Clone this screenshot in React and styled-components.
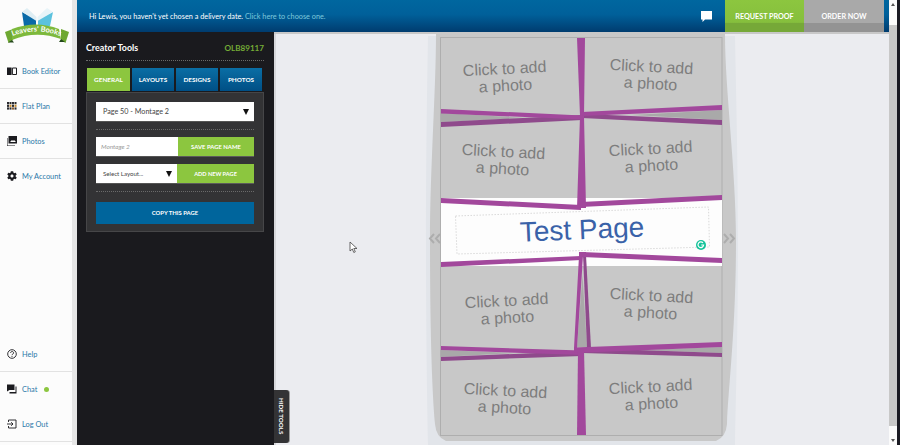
import React from "react";
import styled, { createGlobalStyle } from "styled-components";
import { FaCog } from "react-icons/fa";

const Global = createGlobalStyle`
  html, body { margin: 0; padding: 0; height: 100%; overflow: hidden; background: #ebecf0; }
  #root { height: 445px; }
  * { box-sizing: border-box; }
`;

const Shell = styled.div`
  display: flex; width: 900px; height: 445px; overflow: hidden;
  font-family: Lato, "Open Sans", sans-serif;
`;

/* ---------- Sidebar ---------- */
const Sidebar = styled.aside`
  width: 77px; flex: none; display: flex; flex-direction: column;
  background: #fcfcfc; border-right: 5px solid #e6e6e6;
`;
const LogoBox = styled.div`height: 54px; padding: 0; display: flex;`;
const NavList = styled.nav`display: flex; flex-direction: column;`;
const Spacer = styled.div`flex: 1;`;
const NavItem = styled.a`
  height: 35px; display: flex; align-items: center; gap: 5px; padding-left: 7px;
  font-size: 7.4px; color: #2a78a8; white-space: nowrap;
  border-bottom: 1px solid ${p => p.$line ? "#e2e2e2" : "transparent"};
  svg { flex: none; width: 10px; height: 10px; color: #1b1b1f; }
`;
const Online = styled.span`
  width: 5px; height: 5px; border-radius: 50%; background: #8cc63f; margin-left: 2px;
`;
const BottomPad = styled.div`height: 3px;`;

/* ---------- Workspace ---------- */
const Workspace = styled.div`flex: 1; min-width: 0; display: flex; flex-direction: column;`;
const TopBar = styled.header`
  height: 32px; flex: none; display: flex; align-items: stretch;
  padding-right: 5px;
  background: linear-gradient(#00679f 0%, #00609a 45%, #003c6f 100%);
`;
const Notice = styled.p`
  flex: 1; margin: 0; padding-left: 12px; align-self: center; color: #fff; font-size: 7.3px;
  a { color: #7cc8dc; }
`;
const ChatGlyph = styled.svg`width: 13px; height: 13px; align-self: center; margin-right: 12px;`;
const BarAction = styled.button`
  width: ${p => p.$w}px; border: 0; padding: 0; color: #fff; font: 700 7.2px Lato, sans-serif;
  background: ${p => p.$green
    ? "linear-gradient(#8cc63f 0%, #86bf3d 70%, #76a838 72%, #76a838 100%)"
    : "linear-gradient(#a9a9a9 0%, #a9a9a9 72%, #939393 73%, #939393 100%)"};
`;
const Body = styled.div`flex: 1; min-height: 0; display: flex; position: relative;`;

/* ---------- Tools panel ---------- */
const Tools = styled.section`
  width: 197px; flex: none; background: #1a1a1e; padding: 9px 10px 0 9px;
`;
const ToolsHead = styled.div`
  display: flex; justify-content: space-between; align-items: center; height: 20px;
  border-bottom: 1px dotted #6a6a6a; padding-bottom: 6px; color: #fff; font-size: 8.9px; font-weight: 700;
  b { color: #74ab36; font-size: 8.1px; font-weight: 700; }
`;
const Tabs = styled.div`display: flex; gap: 2px; padding: 7px 0 0 1px; height: 31px;`;
const Tab = styled.button`
  width: ${p => p.$w}px; height: 23px; border: 0; padding: 0; color: #fff;
  font: 700 6.4px Lato, sans-serif;
  background: ${p => p.$on ? "#8cc63f" : "linear-gradient(#0a6ea5, #004f85)"};
`;
const ToolBox = styled.div`
  height: 140px; background: #333335; border: 1px solid #464648; padding: 9px 9px 0;
`;
const Field = styled.div`
  height: 20px; background: #fff; display: flex; align-items: center; justify-content: space-between;
  padding: 0 5px 0 ${p => p.$pl || 7}px; flex: ${p => p.$w ? `0 0 ${p.$w}px` : "none"};
  color: #444; font-size: ${p => p.$fs || 7.2}px; white-space: nowrap;
  border-bottom: 1px solid #555;
`;
const Arrow = styled.i`
  width: 0; height: 0; border-left: 3.5px solid transparent; border-right: 3.5px solid transparent;
  border-top: 6px solid #111;
`;
const Placeholder = styled.span`font-style: italic; color: #999; font-size: 6.4px;`;
const Dots = styled.div`border-top: 1px dotted #6a6a6a; margin: ${p => p.$m};`;
const FormRow = styled.div`display: flex; height: 20px; margin-top: ${p => p.$mt || 0}px;`;
const GreenBtn = styled.button`
  flex: 1; border: 0; padding: 0; background: #8cc63f; color: #fff; font: 700 ${p => p.$fs || 5.9}px Lato, sans-serif;
  border-bottom: 1px solid #5b5b5b;
`;
const CopyBtn = styled.button`
  width: 100%; height: 22px; border: 0; padding: 0; background: #00659c; color: #fff;
  font: 700 5.9px Lato, sans-serif;
`;

/* ---------- Stage ---------- */
const Stage = styled.main`
  flex: 1; min-width: 0; display: flex; justify-content: center; align-items: flex-start;
  background: #ebecf0; border-top: 2px solid #c8c8c8; padding-top: 0;
  box-shadow: inset 2px 0 0 #d6d7db; position: relative; overflow: hidden;
`;
const Canvas = styled.div`width: 315px; height: 411px; flex: none; position: relative; margin-top: -1px;`;
const CanvasArt = styled.svg`display: block; width: 315px; height: 412px;`;
const PhotoLabel = styled.div`
  position: absolute; left: ${p => p.$x - 424}px; top: ${p => p.$y - 33}px;
  transform: translate(-50%, -50%) rotate(${p => p.$r}deg);
  width: 110px; text-align: center; color: #7d7d7d;
  font: 16px/17px "Liberation Sans", Arial, sans-serif;
`;
const TitleLabel = styled(PhotoLabel)`
  width: 200px; font-size: 28px; line-height: 32px; color: #3a62a8;
`;
const Pointer = styled.svg`position: absolute; left: 75px; top: 207px; width: 9px; height: 13px;`;
const HideTab = styled.button`
  position: absolute; left: 197px; top: 358px; width: 15px; height: 53px; border: 0; padding: 0;
  background: #333335; color: #fff; border-radius: 0 3px 3px 0;
  font: 700 6.2px Lato, sans-serif; writing-mode: vertical-rl; text-align: center;
  box-shadow: 1px 0 0 #9a9a9a;
`;

/* ---------- Scrollbar ---------- */
const Scroll = styled.div`
  width: 8px; flex: none; background: #fbfbfb; display: flex; flex-direction: column; align-items: stretch;
`;
const ScrollEnd = styled.div`
  height: ${p => p.$h}px; display: flex; justify-content: center;
  align-items: ${p => p.$down ? "flex-end" : "flex-start"}; padding: 3px 0;
  i {
    width: 0; height: 0; border-left: 2.5px solid transparent; border-right: 2.5px solid transparent;
    ${p => p.$down ? "border-top: 3px solid #555;" : "border-bottom: 3px solid #555;"}
  }
`;
const ScrollThumb = styled.div`flex: 1; background: #c8c8c8;`;
const Edge = styled.div`width: 3px; flex: none; background: #1a1a22;`;

/* ---------- Icons ---------- */
const BookIcon = () => (
  <svg viewBox="0 0 10 10"><path d="M0 1.5h4.6v7.5H0z" fill="currentColor" /><path d="M5.4 2h4.1v6.5H5.4z" fill="none" stroke="currentColor" /></svg>
);
const GridIcon = () => (
  <svg viewBox="0 0 10 10">
    {[0, 1, 2, 3].map(c => [0, 1, 2].map(r => (
      <rect key={`${c}${r}`} x={c * 2.5} y={1 + r * 2.7} width="2" height="2.2"
        fill={r === 1 && c % 2 ? "#c58a2c" : r === 2 && c === 2 ? "#8a5a2b" : "#2b2b2f"} />
    )))}
  </svg>
);
const PhotoIcon = () => (
  <svg viewBox="0 0 10 10"><path d="M1.5 0H10v7.5H1.5z" fill="currentColor" /><path d="M0 2v8h8" fill="none" stroke="currentColor" /><path d="M3 6l2-2 1 1 1-1 2 2z" fill="#fff" /></svg>
);
const HelpIcon = () => (
  <svg viewBox="0 0 10 10" fill="none" stroke="currentColor"><circle cx="5" cy="5" r="4.3" strokeWidth=".9" /><path d="M3.6 4c0-2 3-2 3 0 0 1-1.6 1-1.6 2.2M5 7v.9" strokeWidth=".9" /></svg>
);
const ChatIcon = () => (
  <svg viewBox="0 0 10 10"><path d="M0 .5h7.500v5.500H2.500L0 7.500z" fill="currentColor" /><path d="M8.500 2.500H9.500V9.500H2.500V8H8.500z" fill="currentColor" /></svg>
);
const LogoutIcon = () => (
  <svg viewBox="0 0 10 10" fill="none" stroke="currentColor" strokeWidth=".9"><path d="M1.500 3V1h7.500v8H1.500V7" /><path d="M0 5h6M4.200 3.200L6 5 4.200 6.800" /></svg>
);

const Logo = () => (
  <svg width="72" height="54" viewBox="0 0 72 54">
    <path d="M22 12l14 7v8l-12-1z" fill="#0a6aa8" />
    <path d="M53 12l-15 7v8l12-1z" fill="#5cc2de" />
    <path d="M27 8l9.500 9v4L22 12z" fill="#dfeef4" />
    <path d="M47 8l-9.500 9v4L53 12z" fill="#e8f4f8" />
    <path d="M5 32l8-3v11l-4.500 3z" fill="#6ea832" />
    <path d="M69 32l-8-3v11l4.500 3z" fill="#6ea832" />
    <path d="M12 29Q36 20 59 29L61 39Q36 30 12 40z" fill="#7db93c" />
    <path d="M12 40l-4 2.500 6 0zM61 39l4 3-6 0z" fill="#24481c" />
    <path id="logoArc" d="M13 36Q36 27 60 36" fill="none" />
    <text fontFamily="Lato, sans-serif" fontSize="7.400" fontWeight="700" fill="#fff">
      <textPath href="#logoArc" startOffset="50%" textAnchor="middle">Leavers' Books</textPath>
    </text>
  </svg>
);

const purple = "#a2489c";
const dark = "#8f4a8c";
const strips = [
  [dark, "441,122 582,115 582,120 441,127"],
  [dark, "585,114 722,120 722,125 582,118"],
  [dark, "441,357 582,351 582,356 441,361"],
  [dark, "582,348 722,353 722,357 582,353"],
  [dark, "583,255 586,255 591,348 587,348"],
  [purple, "577,38 585,38 584,116 586,208 577,208 580,116"],
  [purple, "441,109 582,115.500 582,119.500 441,113.500"],
  [purple, "582,112 722,105 722,110 582,116"],
  [purple, "441,198 581,205 581,210 441,203"],
  [purple, "581,202 722,195 722,200 581,207"],
  [purple, "441,262 581,256 581,260 441,267"],
  [purple, "582,252 722,258 722,263 582,257"],
  [purple, "579,252 586,252 586,256 583,256 577,348 574,348 579,256"],
  [purple, "441,346 582,350.500 582,355 441,350"],
  [purple, "574,347.500 722,342 722,347 574,353"],
  [purple, "578,350 584,350 586,435 577,435"],
];

const CanvasDrawing = () => (
  <CanvasArt viewBox="424 33 315 412">
    <path d="M428 36H735C736 90 738 160 738 240C738 330 736 390 735 445H428C427 390 426 330 426 240C426 160 427 90 428 36Z" fill="#e2e5ea" />
    <path d="M436 34H725C725 90 736 170 736 240C736 330 728 390 727 424Q726 437 716 441H446Q436 437 435 424C432 390 430 330 430 240C430 170 436 90 436 34Z" fill="#c8c8c8" />
    <rect x="440.500" y="37.500" width="281.500" height="398" fill="#c8c8c8" stroke="#aeaeae" />
    <rect x="441" y="198" width="281" height="68" fill="#fdfdfd" />
    <path d="M441 113L525 118 441 122zM722 110L632 115 722 120z" fill="#a9a9a9" />
    <path d="M441 350L515 353 441 357zM722 347L640 350 722 353z" fill="#a9a9a9" />
    <path d="M582.500 275L577 347H587z" fill="#a9a9a9" />
    {strips.map(([c, s]) => <polygon key={s} points={s} fill={c} />)}
    <polygon points="455.500,216 708.500,207 709.500,247 457,254" fill="none" stroke="#cfcfcf" strokeWidth=".8" strokeDasharray="1.500 1.500" />
    <circle cx="701" cy="245" r="5" fill="#15c39a" />
    <path d="M703 243a2.800 2.800 0 1 0 .6 2h-2.400" fill="none" stroke="#fff" strokeWidth="1.200" />
    <path d="M434 234l-4 4.500 4 4.500M440 234l-4 4.500 4 4.500M724 234l4 4.500-4 4.500M730 234l4 4.500-4 4.500" fill="none" stroke="#adadad" strokeWidth="2" />
  </CanvasArt>
);

const photos = [
  [505, 77, -3], [651, 74.5, 3], [503, 159.5, 3], [651, 156.5, -3],
  [507, 308.5, -3], [651, 304, 3], [505, 398.5, 3], [651, 395, -3],
];

export default function App() {
  return (
    <Shell>
      <Global />
      <Sidebar>
        <LogoBox><Logo /></LogoBox>
        <NavList>
          <NavItem $line><BookIcon />Book Editor</NavItem>
          <NavItem $line><GridIcon />Flat Plan</NavItem>
          <NavItem $line><PhotoIcon />Photos</NavItem>
          <NavItem><FaCog />My Account</NavItem>
        </NavList>
        <Spacer />
        <NavList>
          <NavItem $line><HelpIcon />Help</NavItem>
          <NavItem><ChatIcon />Chat<Online /></NavItem>
          <NavItem $line><LogoutIcon />Log Out</NavItem>
        </NavList>
        <BottomPad />
      </Sidebar>
      <Workspace>
        <TopBar>
          <Notice>Hi Lewis, you haven't yet chosen a delivery date. <a>Click here to choose one.</a></Notice>
          <ChatGlyph viewBox="0 0 13 13"><path d="M1 1h11v8.500H5L2.500 12V9.500H1z" fill="#fff" /></ChatGlyph>
          <BarAction $w={79} $green>REQUEST PROOF</BarAction>
          <BarAction $w={80}>ORDER NOW</BarAction>
        </TopBar>
        <Body>
          <Tools>
            <ToolsHead>Creator Tools<b>OLB89117</b></ToolsHead>
            <Tabs>
              <Tab $w={43} $on>GENERAL</Tab>
              <Tab $w={42}>LAYOUTS</Tab>
              <Tab $w={42}>DESIGNS</Tab>
              <Tab $w={42}>PHOTOS</Tab>
            </Tabs>
            <ToolBox>
              <Field>Page 50 - Montage 2<Arrow /></Field>
              <Dots $m="7px 0" />
              <FormRow>
                <Field $w={82} $pl={5}><Placeholder>Montage 2</Placeholder></Field>
                <GreenBtn>SAVE PAGE NAME</GreenBtn>
              </FormRow>
              <FormRow $mt={7}>
                <Field $w={81} $fs={6.1}>Select Layout...<Arrow /></Field>
                <GreenBtn $fs={5.6}>ADD NEW PAGE</GreenBtn>
              </FormRow>
              <Dots $m="7px 0" />
              <CopyBtn>COPY THIS PAGE</CopyBtn>
            </ToolBox>
          </Tools>
          <Stage>
            <Canvas>
              <CanvasDrawing />
              {photos.map(([x, y, r]) => (
                <PhotoLabel key={`${x}${y}`} $x={x} $y={y} $r={r}>Click to add<br />a photo</PhotoLabel>
              ))}
              <TitleLabel $x={582} $y={230} $r={-2.5}>Test Page</TitleLabel>
            </Canvas>
            <Pointer viewBox="0 0 9 13"><path d="M1 1v9l2.300-2 1.500 3.500 1.500-.7L4.800 7.500H8z" fill="#fff" stroke="#444" strokeWidth=".8" /></Pointer>
          </Stage>
          <HideTab>HIDE TOOLS</HideTab>
        </Body>
      </Workspace>
      <Scroll>
        <ScrollEnd $h={25}><i /></ScrollEnd>
        <ScrollThumb />
        <ScrollEnd $h={19} $down><i /></ScrollEnd>
      </Scroll>
      <Edge />
    </Shell>
  );
}
